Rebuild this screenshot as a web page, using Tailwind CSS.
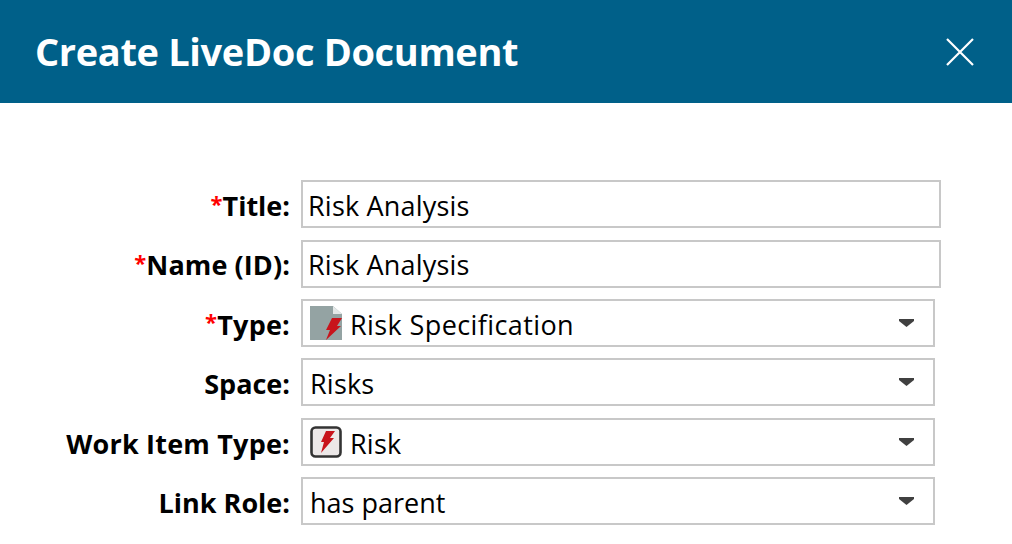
<!DOCTYPE html>
<html lang="en">
<head>
    <meta charset="UTF-8">
    <title>Create LiveDoc Document</title>
    <script src="https://cdn.jsdelivr.net/npm/@tailwindcss/browser@4"></script>
</head>
<body class="bg-white overflow-hidden font-['Open_Sans',sans-serif] text-black">
    <!-- Dialog header -->
    <div class="h-[103px] bg-[#006089] flex items-center justify-between pl-[35px] pr-[38px]">
        <h1 class="text-[38px] font-bold text-white tracking-[-0.35px]">Create LiveDoc Document</h1>
        <svg class="w-[28px] h-[28px]" viewBox="0 0 28 28" fill="none" stroke="white" stroke-width="2.2">
            <path d="M1 1L27 27M27 1L1 27"></path>
        </svg>
    </div>

    <!-- Form rows -->
    <div class="pt-[77.2px] grid grid-cols-[290px_640px] gap-x-[11px] gap-y-[11.4px] text-[27px] tracking-[0.2px]">
        <label class="h-[48px] flex items-center justify-end font-bold pt-[4px] tracking-normal"><span class="text-[#ff0000] text-[22px] -mt-[6px]">*</span>Title:</label>
        <div class="h-[48px] border-2 border-[#c8c8c8] flex items-center pl-[5px] pt-[4px]">Risk Analysis</div>

        <label class="h-[48px] flex items-center justify-end font-bold pt-[4px] tracking-[0.1px]"><span class="text-[#ff0000] text-[22px] -mt-[6px]">*</span>Name (ID):</label>
        <div class="h-[48px] border-2 border-[#c8c8c8] flex items-center pl-[5px] pt-[4px]">Risk Analysis</div>

        <label class="h-[48px] flex items-center justify-end font-bold pt-[4px]"><span class="text-[#ff0000] text-[22px] -mt-[6px]">*</span>Type:</label>
        <div class="h-[48px] w-[634px] border-2 border-[#c8c8c8] flex items-center pl-[7px] pr-[19px]">
            <svg class="w-[32px] h-[34px] mr-[8px] blur-[0.4px]" viewBox="0 0 32 34">
                <path d="M0 0H23L32 8V34H0Z" fill="#94a3a3"></path>
                <path d="M23 0L32 8H23Z" fill="#e4e8e8"></path>
                <path d="M22 12H32L27 20H31L16 34L20 24H16Z" fill="#c8141c"></path>
            </svg>
            <span class="flex-1 pt-[4px] tracking-[0.4px]">Risk Specification</span>
            <svg class="w-[15px] h-[8px]" viewBox="0 0 15 8"><path d="M0 0H15V2L7.5 8L0 2Z" fill="#404040"></path></svg>
        </div>

        <label class="h-[48px] flex items-center justify-end font-bold pt-[4px] tracking-normal">Space:</label>
        <div class="h-[48px] w-[634px] border-2 border-[#c8c8c8] flex items-center pl-[7px] pr-[19px]">
            <span class="flex-1 pt-[4px]">Risks</span>
            <svg class="w-[15px] h-[8px]" viewBox="0 0 15 8"><path d="M0 0H15V2L7.5 8L0 2Z" fill="#404040"></path></svg>
        </div>

        <label class="h-[48px] flex items-center justify-end font-bold pt-[4px]">Work Item Type:</label>
        <div class="h-[48px] w-[634px] border-2 border-[#c8c8c8] flex items-center pl-[7px] pr-[19px]">
            <svg class="w-[32px] h-[32px] mr-[8px] blur-[0.5px]" viewBox="0 0 32 32">
                <rect x="1.5" y="1.5" width="29" height="29" rx="4" fill="#ece8e8" stroke="#333333" stroke-width="2.6"></rect>
                <path d="M16 5H25L20 12H24L11 27L14 16H11Z" fill="#c8141c"></path>
            </svg>
            <span class="flex-1 pt-[4px]">Risk</span>
            <svg class="w-[15px] h-[8px]" viewBox="0 0 15 8"><path d="M0 0H15V2L7.5 8L0 2Z" fill="#404040"></path></svg>
        </div>

        <label class="h-[48px] flex items-center justify-end font-bold pt-[4px] tracking-normal">Link Role:</label>
        <div class="h-[48px] w-[634px] border-2 border-[#c8c8c8] flex items-center pl-[7px] pr-[19px]">
            <span class="flex-1 pt-[4px] tracking-normal">has parent</span>
            <svg class="w-[15px] h-[8px]" viewBox="0 0 15 8"><path d="M0 0H15V2L7.5 8L0 2Z" fill="#404040"></path></svg>
        </div>
    </div>
</body>
</html>
